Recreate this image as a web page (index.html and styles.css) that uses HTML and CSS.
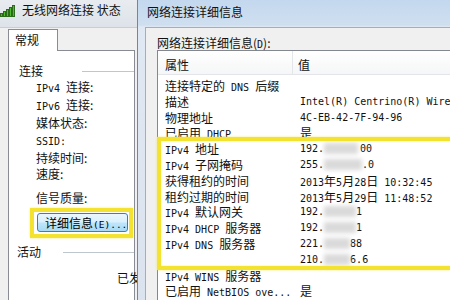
FILE: index.html
```html
<!DOCTYPE html>
<html lang="zh-CN">
<head>
<meta charset="utf-8">
<title>网络连接详细信息</title>
<link rel="stylesheet" href="styles.css">
</head>
<body>
<div class="desk">
  <section class="win back">
    <header class="back-tb">
      <svg class="sig" width="15" height="13" viewBox="0 0 15 13" aria-hidden="true">
        <rect x="0.5" y="9.5" width="2" height="3" fill="#4cbb2c" stroke="#2b6b1a" stroke-width="1"/>
        <rect x="3.5" y="7.5" width="2" height="5" fill="#4cbb2c" stroke="#2b6b1a" stroke-width="1"/>
        <rect x="6.5" y="5.5" width="2" height="7" fill="#4cbb2c" stroke="#2b6b1a" stroke-width="1"/>
        <rect x="9.5" y="3.5" width="2" height="9" fill="#4cbb2c" stroke="#2b6b1a" stroke-width="1"/>
        <rect x="12.5" y="1.5" width="2" height="11" fill="#4cbb2c" stroke="#2b6b1a" stroke-width="1"/>
      </svg>
      <span class="tt">无线网络连接 状态</span>
    </header>
    <div class="back-body">
      <div class="tabs"><span class="tab">常规</span></div>
      <div class="panel">
        <div class="grp g1"><span>连接</span><i class="rule"></i></div>
        <ul class="fields">
          <li><span class="m">IPv4 </span>连接:</li>
          <li><span class="m">IPv6 </span>连接:</li>
          <li>媒体状态:</li>
          <li><span class="m">SSID:</span></li>
          <li>持续时间:</li>
          <li>速度:</li>
        </ul>
        <div class="sq">信号质量:</div>
        <div class="hlbtn"><button class="btn" type="button">详细信息<span class="bm">(E)...</span></button></div>
        <div class="grp g2"><span>活动</span><i class="rule"></i></div>
        <div class="sent">已发送</div>
        <div class="bytes">字节:</div>
      </div>
    </div>
  </section>

  <section class="win front">
    <header class="front-tb">网络连接详细信息</header>
    <div class="front-body">
      <div class="lbl">网络连接详细信息(<span class="m">D</span>):</div>
      <div class="list">
        <div class="hdr"><span class="k">属性</span><span class="v">值</span></div>
        <div class="rows">
          <div class="row"><span class="k">连接特定的<span class="m"> DNS </span>后缀</span><span class="v"></span></div>
          <div class="row"><span class="k">描述</span><span class="v m">Intel(R) Centrino(R) Wireless-N 1030</span></div>
          <div class="row"><span class="k">物理地址</span><span class="v m">4C-EB-42-7F-94-96</span></div>
          <div class="row"><span class="k">已启用<span class="m"> DHCP</span></span><span class="v">是</span></div>
          <div class="row"><span class="k"><span class="m">IPv4 </span>地址</span><span class="v m">192.<i class="bl b1"></i>00</span></div>
          <div class="row"><span class="k"><span class="m">IPv4 </span>子网掩码</span><span class="v m">255.<i class="bl b2"></i>.0</span></div>
          <div class="row"><span class="k">获得租约的时间</span><span class="v"><span class="m">2013</span>年<span class="m">5</span>月<span class="m">28</span>日<span class="m"> 10:32:45</span></span></div>
          <div class="row"><span class="k">租约过期的时间</span><span class="v"><span class="m">2013</span>年<span class="m">5</span>月<span class="m">29</span>日<span class="m"> 11:48:52</span></span></div>
          <div class="row"><span class="k"><span class="m">IPv4 </span>默认网关</span><span class="v m">192.<i class="bl b3"></i>1</span></div>
          <div class="row"><span class="k"><span class="m">IPv4 DHCP </span>服务器</span><span class="v m">192.<i class="bl b3"></i>1</span></div>
          <div class="row"><span class="k"><span class="m">IPv4 DNS </span>服务器</span><span class="v m">221.<i class="bl b4"></i>88</span></div>
          <div class="row"><span class="k"></span><span class="v m">210.<i class="bl b4"></i>6.6</span></div>
          <div class="row"><span class="k"><span class="m">IPv4 WINS </span>服务器</span><span class="v"></span></div>
          <div class="row"><span class="k">已启用<span class="m"> NetBIOS ove...</span></span><span class="v">是</span></div>
          <div class="hl"></div>
        </div>
      </div>
    </div>
  </section>
</div>
</body>
</html>
```

FILE: styles.css
```css
body {
  margin: 0;
}

.desk {
  width: 450px;
  height: 300px;
  display: flex;
  overflow: hidden;
  font: 12px/16px "Noto Sans CJK SC", sans-serif;
  color: #111;
  background: #f0f0f0;
}

.m {
  font-family: "DejaVu Sans Mono", "Liberation Mono", monospace;
  font-size: 10px;
  white-space: pre;
}

/* ---------- back window ---------- */
.back {
  width: 137px;
  flex: none;
  display: flex;
  flex-direction: column;
  overflow: hidden;
  background: #f0f0f0;
}

.back-tb {
  height: 27px;
  flex: none;
  box-sizing: border-box;
  display: flex;
  align-items: flex-start;
  padding-top: 2px;
  background: linear-gradient(#e8ecf0, #dde3e9);
  white-space: nowrap;
}

.sig {
  margin: 2px 7px 0 0;
  flex: none;
}

.back-body {
  flex: 1;
  border-top: 1px solid #c8ced6;
  padding-top: 1px;
}

.tabs {
  display: flex;
  padding-left: 8px;
}

.tab {
  height: 22px;
  margin-bottom: -1px;
  box-sizing: border-box;
  border: 1px solid #898c95;
  border-bottom: none;
  background: #fff;
  padding: 0 18px 0 6px;
  line-height: 20px;
  position: relative;
  z-index: 1;
}

.panel {
  margin-left: 8px;
  width: 127px;
  height: 320px;
  box-sizing: border-box;
  border: 1px solid #898c95;
  background: #fff;
  white-space: nowrap;
}

.grp {
  display: flex;
  align-items: center;
  height: 16px;
}

.rule {
  flex: 1;
  height: 1px;
  background: #bfc6cd;
}

.g1 {
  margin-top: 12px;
  padding-left: 10px;
}

.g1 .rule {
  margin-left: 39px;
}

.fields {
  list-style: none;
  margin: 0;
  padding: 0 0 0 27px;
  line-height: 16.2px;
}

.sq {
  margin-top: 8px;
  padding-left: 27px;
}

.hlbtn {
  margin: 2px 0 0 21px;
  width: 103px;
  box-sizing: border-box;
  border: 4px solid #f4e231;
  box-shadow: 0 0 2px rgba(244, 226, 49, 0.7);
  padding: 1px 1px 2px 3px;
  display: flex;
}

.btn {
  width: 91px;
  height: 19px;
  box-sizing: border-box;
  border: 1px solid #3c7fb1;
  border-radius: 3px;
  background: linear-gradient(#eaf6fd, #d9f0fc 48%, #bee6fd 52%, #a7d9f5);
  font: 12px/17px "Noto Sans CJK SC", sans-serif;
  color: #000;
  padding: 0 0 0 7px;
  text-align: left;
  white-space: nowrap;
  overflow: hidden;
}

.bm {
  font-family: "DejaVu Sans Mono", "Liberation Mono", monospace;
  font-size: 9.5px;
}

.g2 {
  margin-top: 6px;
  padding-left: 8px;
}

.g2 .rule {
  margin-left: 22px;
}

.sent {
  margin-top: 10px;
  padding-left: 108px;
}

.bytes {
  margin-top: 14px;
  padding-left: 26px;
}

/* ---------- front window ---------- */
.front {
  flex: none;
  width: 313px;
  box-sizing: border-box;
  border-left: 1px solid #7b8591;
  background: linear-gradient(#c3d8ee, #cfdff0 25px, #e0e9f3 27px, #dbe4ee);
  display: flex;
  flex-direction: column;
  overflow: hidden;
}

.front-tb {
  height: 27px;
  flex: none;
  box-sizing: border-box;
  padding: 4px 0 0 9px;
  line-height: 16px;
  white-space: nowrap;
}

.front-body {
  flex: 1;
  margin-left: 7px;
  border-top: 1px solid #a3aebb;
  border-left: 1px solid #a3aebb;
  background: #f0f0f0;
  padding: 7px 0 0 11px;
}

.lbl {
  height: 15px;
  line-height: 15px;
  white-space: nowrap;
}

.list {
  width: 340px;
  height: 300px;
  border: 1px solid #828790;
  background: #fff;
}

.hdr {
  display: flex;
  height: 24px;
  box-sizing: border-box;
  border-bottom: 1px solid #e3e5e8;
  background: linear-gradient(#ffffff, #f5f6f7);
}

.hdr span {
  padding-top: 6px;
  line-height: 16px;
}

.hdr .k {
  width: 135px;
  flex: none;
  box-sizing: border-box;
  border-right: 1px solid #e3e5e8;
  padding-left: 7px;
}

.hdr .v {
  padding-left: 5px;
}

.rows {
  position: relative;
  padding-top: 3px;
}

.row {
  display: flex;
  height: 15.8px;
  line-height: 15.8px;
  white-space: nowrap;
}

.row .k {
  width: 140px;
  flex: none;
  box-sizing: border-box;
  padding-left: 7px;
}

.row .v {
  padding-left: 2px;
}

.bl {
  display: inline-block;
  height: 11px;
  vertical-align: -2px;
  background: #dadada;
  filter: blur(2px);
}

.b1 { width: 34px; margin-right: 2px; }
.b2 { width: 38px; }
.b3 { width: 32px; }
.b4 { width: 26px; }

.hl {
  position: absolute;
  top: 62px;
  left: -1px;
  right: -20px;
  height: 133px;
  box-sizing: border-box;
  border: 4px solid #f4e231;
  box-shadow: 0 0 2px rgba(244, 226, 49, 0.7), inset 0 0 2px rgba(244, 226, 49, 0.7);
}
```
